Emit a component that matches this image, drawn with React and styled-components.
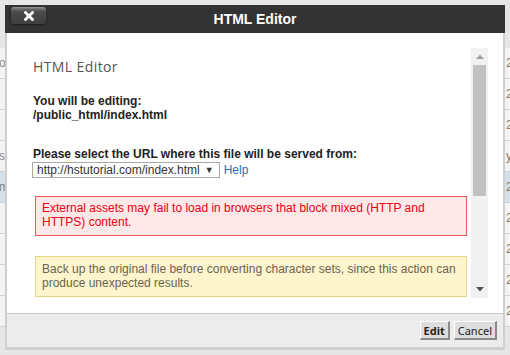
import styled, { createGlobalStyle } from "styled-components";

const GlobalStyle = createGlobalStyle`
  html, body {
    margin: 0;
    padding: 0;
  }
  body {
    background: #e6e6e6;
    font-family: "Liberation Sans", Arial, sans-serif;
  }
`;

const rows = [
  { left: "ov", right: "2" },
  { left: "", right: "2" },
  { left: "", right: "2" },
  { left: "s", right: "y" },
  { left: "m", right: "2", selected: true },
  { left: "", right: "2" },
  { left: "", right: "2" },
  { left: "", right: "2" },
  { left: "", right: "2" },
];

/** HTML 에디터 모달 */
const App = () => {
  return (
    <Page>
      <GlobalStyle />
      <BgTable>
        {rows.map((row, i) => (
          <BgRow key={i} $selected={row.selected}>
            <BgCell>{row.left}</BgCell>
            <BgCell $right>{row.right}</BgCell>
          </BgRow>
        ))}
      </BgTable>

      <Dialog>
        <Header>
          <CloseButton aria-label="close">
            <svg width="10" height="10" viewBox="0 0 10 10">
              <path d="M1.5 1.5 L8.5 8.5 M8.5 1.5 L1.5 8.5" stroke="#fff" strokeWidth="2.8" strokeLinecap="square" />
            </svg>
          </CloseButton>
          <Title>HTML Editor</Title>
          <span />
        </Header>

        <Body>
          <Content>
            <Heading>HTML Editor</Heading>
            <Para>
              You will be editing:
              <br />
              /public_html/index.html
            </Para>
            <Para $gap={25}>Please select the URL where this file will be served from:</Para>
            <UrlRow>
              <FakeSelect>
                http://hstutorial.com/index.html
                <Caret>▼</Caret>
              </FakeSelect>
              <HelpLink href="#">Help</HelpLink>
            </UrlRow>
            <Alert $kind="error">
              External assets may fail to load in browsers that block mixed (HTTP and HTTPS) content.
            </Alert>
            <Alert $kind="warn">
              Back up the original file before converting character sets, since this action can produce unexpected results.
            </Alert>
          </Content>
          <Scrollbar>
            <ScrollArrow>
              <svg width="8" height="5" viewBox="0 0 8 5">
                <path d="M0 5 L4 0.5 L8 5 Z" fill="#a3a3a3" />
              </svg>
            </ScrollArrow>
            <Thumb />
            <Track />
            <ScrollArrow>
              <svg width="8" height="5" viewBox="0 0 8 5">
                <path d="M0 0 L4 4.5 L8 0 Z" fill="#505050" />
              </svg>
            </ScrollArrow>
          </Scrollbar>
        </Body>

        <Footer>
          <FooterButton $primary>Edit</FooterButton>
          <FooterButton>Cancel</FooterButton>
        </Footer>
      </Dialog>
    </Page>
  );
};

export default App;

const Page = styled.div`
  position: relative;
  width: 510px;
  height: 355px;
  overflow: hidden;
  background: #e6e6e6;
`;

const BgTable = styled.div`
  padding-top: 48px;
`;

const BgRow = styled.div`
  display: grid;
  grid-template-columns: 506px 1fr;
  align-items: center;
  height: 30px;
  border-bottom: 1px solid #d2d2d2;
  background: ${(p) => (p.$selected ? "#d5e1ea" : "#f3f3f3")};
  font-size: 12px;
  color: #8a7a66;
`;

const BgCell = styled.div`
  white-space: nowrap;
  overflow: hidden;
  margin-left: ${(p) => (p.$right ? "0" : "-1px")};
  color: ${(p) => (p.$right ? "#8a7a66" : "#888")};
`;

const Dialog = styled.div`
  position: absolute;
  top: 5px;
  left: 5px;
  width: 500px;
  height: 345px;
  display: flex;
  flex-direction: column;
`;

const Header = styled.div`
  height: 28px;
  flex: none;
  background: #333;
  display: grid;
  grid-template-columns: 1fr auto 1fr;
  align-items: center;
`;

const CloseButton = styled.button`
  align-self: start;
  margin: 2px 0 0 6px;
  width: 35px;
  height: 17px;
  padding: 0;
  border: none;
  border-radius: 3px;
  background: linear-gradient(#9a9a9a 0, #6a6a6a 2px, #4a4a4a 5px, #3f3f3f 100%);
  box-shadow: 0 1px 2px #1c1c1c;
  display: flex;
  align-items: center;
  justify-content: center;
`;

const Title = styled.h1`
  margin: 0;
  font: bold 14px "Liberation Sans", Arial, sans-serif;
  color: #fff;
  line-height: 28px;
`;

const Body = styled.div`
  flex: 1;
  display: flex;
  min-height: 0;
  padding: 15px;
  background: #fff;
  border-left: 2px solid #cfcfcf;
  border-right: 2px solid #cfcfcf;
`;

const Content = styled.div`
  flex: 1;
  overflow: hidden;
  padding: 10px 0 0 11px;
  color: #222;
  font-size: 12px;
`;

const Heading = styled.h2`
  margin: 0;
  font: 400 14px "Open Sans", sans-serif;
  letter-spacing: 0.4px;
  line-height: 18px;
  color: #555;
`;

const Para = styled.p`
  margin: ${(p) => p.$gap || 18}px 0 0;
  font-weight: bold;
  line-height: 14px;
`;

const UrlRow = styled.div`
  display: flex;
  align-items: center;
  gap: 4px;
  margin: 1px 0 0 -1px;
`;

const FakeSelect = styled.div`
  display: flex;
  align-items: center;
  gap: 5px;
  box-sizing: border-box;
  height: 16px;
  padding: 0 5px 0 4px;
  border: 1px solid #a9a9a9;
  font-size: 12px;
  color: #333;
`;

const Caret = styled.span`
  font-size: 9px;
  color: #333;
`;

const HelpLink = styled.a`
  color: #2a6ebb;
  text-decoration: none;
  font-size: 12px;
`;

const Alert = styled.div`
  margin: ${(p) => (p.$kind === "error" ? 18 : 20)}px 4px 0 2px;
  padding: ${(p) => (p.$kind === "error" ? 4 : 5)}px 6px 6px;
  line-height: 14px;
  font-size: 12px;
  border: 1px solid ${(p) => (p.$kind === "error" ? "#f45555" : "#e6d685")};
  background: ${(p) => (p.$kind === "error" ? "#ffe8e8" : "#fff5cc")};
  color: ${(p) => (p.$kind === "error" ? "#ee0011" : "#6b6352")};
`;

const Scrollbar = styled.div`
  width: 17px;
  flex: none;
  display: flex;
  flex-direction: column;
  background: #f1f1f1;
`;

const ScrollArrow = styled.div`
  height: 17px;
  flex: none;
  display: flex;
  align-items: center;
  justify-content: center;
`;

const Thumb = styled.div`
  height: 131px;
  margin: 0 2px;
  background: #c1c1c1;
`;

const Track = styled.div`
  flex: 1;
`;

const Footer = styled.div`
  height: 33px;
  flex: none;
  display: flex;
  align-items: center;
  justify-content: flex-end;
  gap: 4px;
  padding-right: 6px;
  background: #ececec;
  border: 2px solid #cfcfcf;
  border-top: 1px solid #c8c8c8;
  border-bottom-width: 3px;
`;

const FooterButton = styled.button`
  box-sizing: border-box;
  height: 19px;
  padding: 0 3px;
  font: ${(p) => (p.$primary ? "bold" : "normal")} 11px "Noto Sans", sans-serif;
  color: #222;
  background: #dedede;
  border-style: solid;
  border-width: 1px 2px 2px 1px;
  border-color: #fff #8a8a8a #8a8a8a #fff;
  line-height: 1;
`;
